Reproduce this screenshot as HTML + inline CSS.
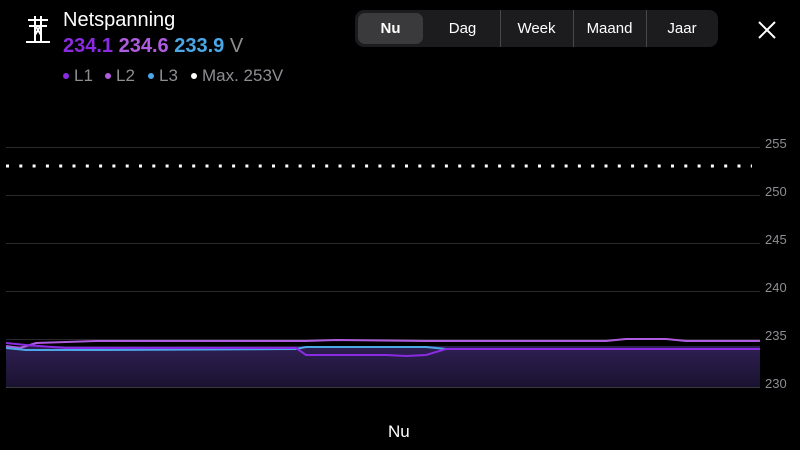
<!DOCTYPE html><html><head><style>
body{margin:0;width:800px;height:450px;background:#000;font-family:"Liberation Sans",sans-serif;overflow:hidden;position:relative;color:#fff}
.a{position:absolute}
.seg{left:355px;top:10px;width:363px;height:37px;background:#1c1c1e;border-radius:9px}
.seg div{position:absolute;top:0;height:37px;line-height:37px;text-align:center;font-size:15px}
.sep{position:absolute;top:9px;width:1px;height:19px;background:#48484a}
.gl{position:absolute;left:6px;width:754px;height:1px;background:#2a2a2a}
.yl{position:absolute;left:765px;font-size:13px;color:#8e8e93}
.dot{position:absolute;top:73px;width:6px;height:6px;border-radius:50%}
.lt{position:absolute;top:66px;font-size:17px;color:#8e8e93;white-space:nowrap}
</style></head><body>
<svg class="a" style="left:25px;top:15px" width="26" height="28" viewBox="0 0 26 28" fill="none" stroke="#fff" stroke-width="2"><path d="M1 27H25M3 5H23M4 11H22M10 1V27M16 1V27M10 10L16 20M16 10L10 20"/></svg>
<div class="a" style="left:63px;top:9px;font-size:20px">Netspanning</div>
<div class="a" style="left:63px;top:35px;font-size:20px;font-weight:bold"><span style="color:#8a2be2">234.1</span> <span style="color:#b05ce0">234.6</span> <span style="color:#4aa8e8">233.9</span> <span style="color:#8e8e93;font-weight:normal">V</span></div>
<div class="dot" style="left:63px;background:#8a2be2"></div><div class="lt" style="left:74px">L1</div>
<div class="dot" style="left:105px;background:#b05ce0"></div><div class="lt" style="left:116px">L2</div>
<div class="dot" style="left:148px;background:#4aa8e8"></div><div class="lt" style="left:159px">L3</div>
<div class="dot" style="left:191px;background:#fff"></div><div class="lt" style="left:202px">Max. 253V</div>
<div class="a seg">
<div style="left:3px;top:3px;height:31px;line-height:31px;width:65px;background:#3a3a3c;border-radius:7px;font-weight:bold">Nu</div>
<div style="left:70px;width:75px">Dag</div><div class="sep" style="left:145px"></div>
<div style="left:145px;width:73px">Week</div><div class="sep" style="left:218px"></div>
<div style="left:218px;width:73px">Maand</div><div class="sep" style="left:291px"></div>
<div style="left:291px;width:72px">Jaar</div></div>
<svg class="a" style="left:758px;top:21px" width="18" height="18" stroke="#fff" stroke-width="2"><path d="M1 1L17 17M17 1L1 17"/></svg>
<div class="gl" style="top:147px"></div><div class="gl" style="top:195px"></div><div class="gl" style="top:243px"></div><div class="gl" style="top:291px"></div><div class="gl" style="top:339px"></div><div class="gl" style="top:387px;background:#3a3a3a"></div>
<div class="yl" style="top:136px">255</div><div class="yl" style="top:184px">250</div><div class="yl" style="top:232px">245</div><div class="yl" style="top:280px">240</div><div class="yl" style="top:328px">235</div><div class="yl" style="top:376px">230</div>
<svg class="a" style="left:0;top:164px" width="760" height="4"><line x1="6" y1="2" x2="752" y2="2" stroke="#fff" stroke-width="3" stroke-dasharray="3 10.3"/></svg>
<div class="a" style="left:6px;top:346px;width:754px;height:41px;background:linear-gradient(#2e1f52,#1a1230)"></div>
<svg class="a" style="left:6px;top:335px" width="754" height="25" fill="none" stroke-width="2">
<path d="M0 11L14 13L30 8L60 7L90 6L300 6L330 5L420 6L600 6L620 4L660 4L680 6L754 6" stroke="#b05ce0"/>
<path d="M0 13L20 15L100 15L290 14L300 12L420 12L440 14L754 14" stroke="#4aa8e8"/>
<path d="M0 8L20 10L60 13L100 13L290 13L300 20L380 20L400 21L420 20L440 14L754 14" stroke="#8a2be2"/>
</svg>
<div class="a" style="left:388px;top:422px;font-size:17px">Nu</div>
</body></html>
